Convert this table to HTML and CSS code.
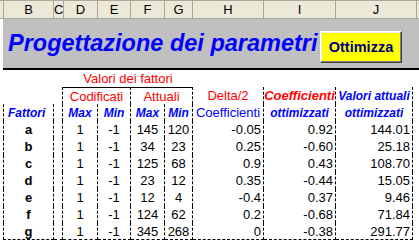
FILE: index.html
```html
<!DOCTYPE html>
<html lang="it">
<head>
<meta charset="utf-8">
<title>Progettazione dei parametri</title>
<link rel="stylesheet" href="styles.css">
</head>
<body>
<div class="sheet">
  <div class="colhead">
    <div class="ch corner"></div>
    <div class="ch">B</div>
    <div class="ch">C</div>
    <div class="ch">D</div>
    <div class="ch">E</div>
    <div class="ch">F</div>
    <div class="ch">G</div>
    <div class="ch">H</div>
    <div class="ch">I</div>
    <div class="ch">J</div>
    <div class="ch rest"></div>
  </div>
  <div class="banner">
    <h1 class="title">Progettazione dei parametri</h1>
    <div class="btn">Ottimizza</div>
  </div>
  <div class="grid">
    <!-- row 1 -->
    <div class="c"></div>
    <div class="c"></div>
    <div class="c span4 red">Valori dei fattori</div>
    <div class="c"></div>
    <div class="c"></div>
    <div class="c"></div>
    <!-- row 2 -->
    <div class="c"></div>
    <div class="c r"></div>
    <div class="c span2 r top red">Codificati</div>
    <div class="c span2 r top red">Attuali</div>
    <div class="c r red">Delta/2</div>
    <div class="c r red hi">Coefficienti</div>
    <div class="c r blue hi">Valori attuali</div>
    <!-- row 3 -->
    <div class="c l r blue hi left">Fattori</div>
    <div class="c r"></div>
    <div class="c r blue hi">Max</div>
    <div class="c r blue hi">Min</div>
    <div class="c r blue hi">Max</div>
    <div class="c r blue hi">Min</div>
    <div class="c r blue">Coefficienti</div>
    <div class="c r blue hi">ottimizzati</div>
    <div class="c r blue hi">ottimizzati</div>
    <!-- data -->
    <div class="c l r b">a</div><div class="c r"></div><div class="c r">1</div><div class="c r">-1</div><div class="c r">145</div><div class="c r">120</div><div class="c r num">-0.05</div><div class="c r num">0.92</div><div class="c r num">144.01</div>
    <div class="c l r b">b</div><div class="c r"></div><div class="c r">1</div><div class="c r">-1</div><div class="c r">34</div><div class="c r">23</div><div class="c r num">0.25</div><div class="c r num">-0.60</div><div class="c r num">25.18</div>
    <div class="c l r b">c</div><div class="c r"></div><div class="c r">1</div><div class="c r">-1</div><div class="c r">125</div><div class="c r">68</div><div class="c r num">0.9</div><div class="c r num">0.43</div><div class="c r num">108.70</div>
    <div class="c l r b">d</div><div class="c r"></div><div class="c r">1</div><div class="c r">-1</div><div class="c r">23</div><div class="c r">12</div><div class="c r num">0.35</div><div class="c r num">-0.44</div><div class="c r num">15.05</div>
    <div class="c l r b">e</div><div class="c r"></div><div class="c r">1</div><div class="c r">-1</div><div class="c r">12</div><div class="c r">4</div><div class="c r num">-0.4</div><div class="c r num">0.37</div><div class="c r num">9.46</div>
    <div class="c l r b">f</div><div class="c r"></div><div class="c r">1</div><div class="c r">-1</div><div class="c r">124</div><div class="c r">62</div><div class="c r num">0.2</div><div class="c r num">-0.68</div><div class="c r num">71.84</div>
    <div class="c l r b bt">g</div><div class="c r bt"></div><div class="c r bt">1</div><div class="c r bt">-1</div><div class="c r bt">345</div><div class="c r bt">268</div><div class="c r num bt">0</div><div class="c r num bt">-0.38</div><div class="c r num bt">291.77</div>
  </div>
</div>
</body>
</html>
```

FILE: styles.css
```css
html, body {
  margin: 0;
  padding: 0;
  background: #ffffff;
}

.sheet {
  width: 419px;
  height: 240px;
  overflow: hidden;
  font-family: "Liberation Sans", Arial, sans-serif;
  color: #000;
}

.colhead {
  display: grid;
  grid-template-columns: 4px 50px 10px 34px 33px 34px 28px 71px 72px 81px 1fr;
  height: 19px;
  box-sizing: border-box;
  border-top: 1px solid #aca899;
  border-bottom: 1px solid #aca899;
  background: #ece9d8;
}

.ch {
  box-sizing: border-box;
  border-right: 1px solid #aca899;
  font-size: 13px;
  line-height: 17px;
  text-align: center;
}

.ch.rest {
  border-right: 0;
}

.banner {
  margin-left: 3px;
  height: 51px;
  box-sizing: border-box;
  background: #c0c0c0;
  border-bottom: 2px solid #000;
  display: flex;
  align-items: center;
}

.title {
  margin: 0 0 0 5px;
  font-size: 23.5px;
  font-weight: bold;
  font-style: italic;
  color: #0000ff;
  white-space: nowrap;
}

.btn {
  margin-left: auto;
  margin-right: 17px;
  align-self: flex-start;
  margin-top: 12px;
  width: 82px;
  height: 32px;
  box-sizing: border-box;
  background: #ffff00;
  border-top: 1px solid #ffffff;
  border-left: 1px solid #ffffff;
  border-right: 1px solid #404040;
  border-bottom: 1px solid #404040;
  box-shadow: inset -1px -1px 0 #808080, inset 1px 1px 0 #f0f0f0;
  display: flex;
  align-items: center;
  justify-content: center;
  font-size: 14.5px;
  font-weight: bold;
  color: #000080;
}

.grid {
  margin-left: 3px;
  display: grid;
  grid-template-columns: 51px 9px 35px 33px 34px 28px 71px 72px 77px;
  grid-auto-rows: 17px;
}

.c {
  box-sizing: border-box;
  font-size: 13px;
  white-space: nowrap;
  display: flex;
  align-items: center;
  justify-content: center;
}

.span4 { grid-column: span 4; }
.span2 { grid-column: span 2; }

.l { border-left: 1px dashed #000; }
.r { border-right: 1px dashed #000; }
.bt { border-bottom: 1px dashed #000; }
.top { border-top: 1px solid #000; }

.red { color: #ff0000; }
.blue { color: #0000ff; }
.hi { font-style: italic; }
.red.hi { font-weight: bold; }
.blue.hi { font-weight: bold; font-size: 12px; }
.left { justify-content: flex-start; padding-left: 4px; }
.b { font-weight: bold; }
.num { justify-content: flex-end; padding-right: 2px; }
```
